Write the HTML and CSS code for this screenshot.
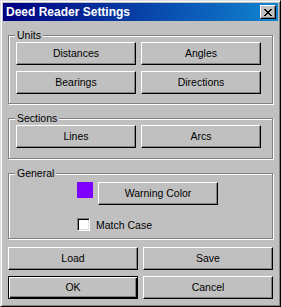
FILE: index.html
```html
<!DOCTYPE html>
<html>
<head>
<meta charset="utf-8">
<title>Deed Reader Settings</title>
<link rel="stylesheet" href="styles.css">
</head>
<body>
<div class="window">
  <div class="titlebar">
    <span class="title">Deed Reader Settings</span>
    <button class="close" aria-label="Close">
      <svg width="8" height="7" viewBox="0 0 8 7"><path d="M0 0h2v1h1v1h2V1h1V0h2v1H7v1H6v1H5v1h1v1h1v1h1v1H6V6H5V5H3v1H2v1H0V6h1V5h1V4h1V3H2V2H1V1H0z" fill="#000"/></svg>
    </button>
  </div>
  <div class="content">
    <fieldset class="group group-units">
      <legend>Units</legend>
      <div class="pair-grid">
        <button class="btn">Distances</button>
        <button class="btn">Angles</button>
        <button class="btn">Bearings</button>
        <button class="btn">Directions</button>
      </div>
    </fieldset>
    <fieldset class="group group-sections">
      <legend>Sections</legend>
      <div class="pair-grid">
        <button class="btn">Lines</button>
        <button class="btn">Arcs</button>
      </div>
    </fieldset>
    <fieldset class="group group-general">
      <legend>General</legend>
      <div class="general-body">
        <div class="color-row">
          <span class="swatch"></span>
          <button class="btn btn-wide">Warning Color</button>
        </div>
        <label class="check-row">
          <span class="checkbox"></span>
          <span>Match Case</span>
        </label>
      </div>
    </fieldset>
    <div class="actions">
      <button class="btn">Load</button>
      <button class="btn">Save</button>
      <button class="btn btn-default">OK</button>
      <button class="btn">Cancel</button>
    </div>
  </div>
</div>
</body>
</html>
```

FILE: styles.css
```css
html, body {
  margin: 0;
  padding: 0;
  background: #c0c0c0;
}

body {
  font-family: "Liberation Sans", Arial, sans-serif;
  font-size: 10.5px;
  color: #000;
}

.window {
  width: 281px;
  height: 307px;
  box-sizing: border-box;
  background: #c0c0c0;
  border: 1px solid;
  border-color: #dfdfdf #000 #000 #dfdfdf;
  box-shadow: inset 1px 1px #fff, inset -1px -1px #808080;
  padding: 2px;
}

.titlebar {
  height: 18px;
  display: flex;
  align-items: center;
  justify-content: space-between;
  padding: 0 2px 0 3px;
  background: linear-gradient(90deg, #000080, #1084d0);
  color: #fff;
  font-weight: bold;
  font-size: 12px;
}

.title {
  line-height: 18px;
  white-space: nowrap;
}

.close {
  width: 16px;
  height: 14px;
  box-sizing: border-box;
  padding: 0;
  margin: 0;
  display: flex;
  align-items: center;
  justify-content: center;
  background: #c0c0c0;
  border: 1px solid;
  border-color: #fff #000 #000 #fff;
  box-shadow: inset -1px -1px #808080;
}

.content {
  display: flex;
  flex-direction: column;
  padding: 0 2px;
}

.group {
  margin: 8px 3px 0 3px;
  padding: 0 7px 9px 7px;
  border: 1px solid #808080;
  box-shadow: inset 1px 1px #fff, 1px 1px #fff;
  min-width: 0;
}

.group legend {
  padding: 0 2px;
  margin-left: -1px;
  line-height: 13px;
  background: #c0c0c0;
}

.group-sections {
  padding-bottom: 10px;
}

.group-general {
  padding-bottom: 7px;
}

.pair-grid {
  display: grid;
  grid-template-columns: 120px 120px;
  column-gap: 5px;
  row-gap: 6px;
}

.btn {
  height: 23px;
  box-sizing: border-box;
  padding: 0;
  margin: 0;
  background: #c0c0c0;
  border: 1px solid;
  border-color: #fff #000 #000 #fff;
  box-shadow: inset -1px -1px #808080;
  font: inherit;
  color: #000;
  line-height: 21px;
}

.btn-default {
  border-color: #000;
  box-shadow: inset 1px 1px #fff, inset -1px -1px #000, inset -2px -2px #808080;
}

.general-body {
  padding: 2px 0 0 61px;
  display: flex;
  flex-direction: column;
}

.color-row {
  display: flex;
  gap: 5px;
}

.swatch {
  width: 16px;
  height: 16px;
  background: #8000ff;
}

.btn-wide {
  width: 120px;
}

.check-row {
  display: flex;
  align-items: center;
  gap: 6px;
  margin-top: 13px;
  height: 13px;
}

.checkbox {
  width: 13px;
  height: 13px;
  box-sizing: border-box;
  background: #fff;
  border: 1px solid;
  border-color: #808080 #fff #fff #808080;
  box-shadow: inset 1px 1px #000, inset -1px -1px #dfdfdf;
}

.actions {
  display: grid;
  grid-template-columns: 130px 130px;
  column-gap: 5px;
  row-gap: 6px;
  margin: 8px 3px 0 3px;
}
```
